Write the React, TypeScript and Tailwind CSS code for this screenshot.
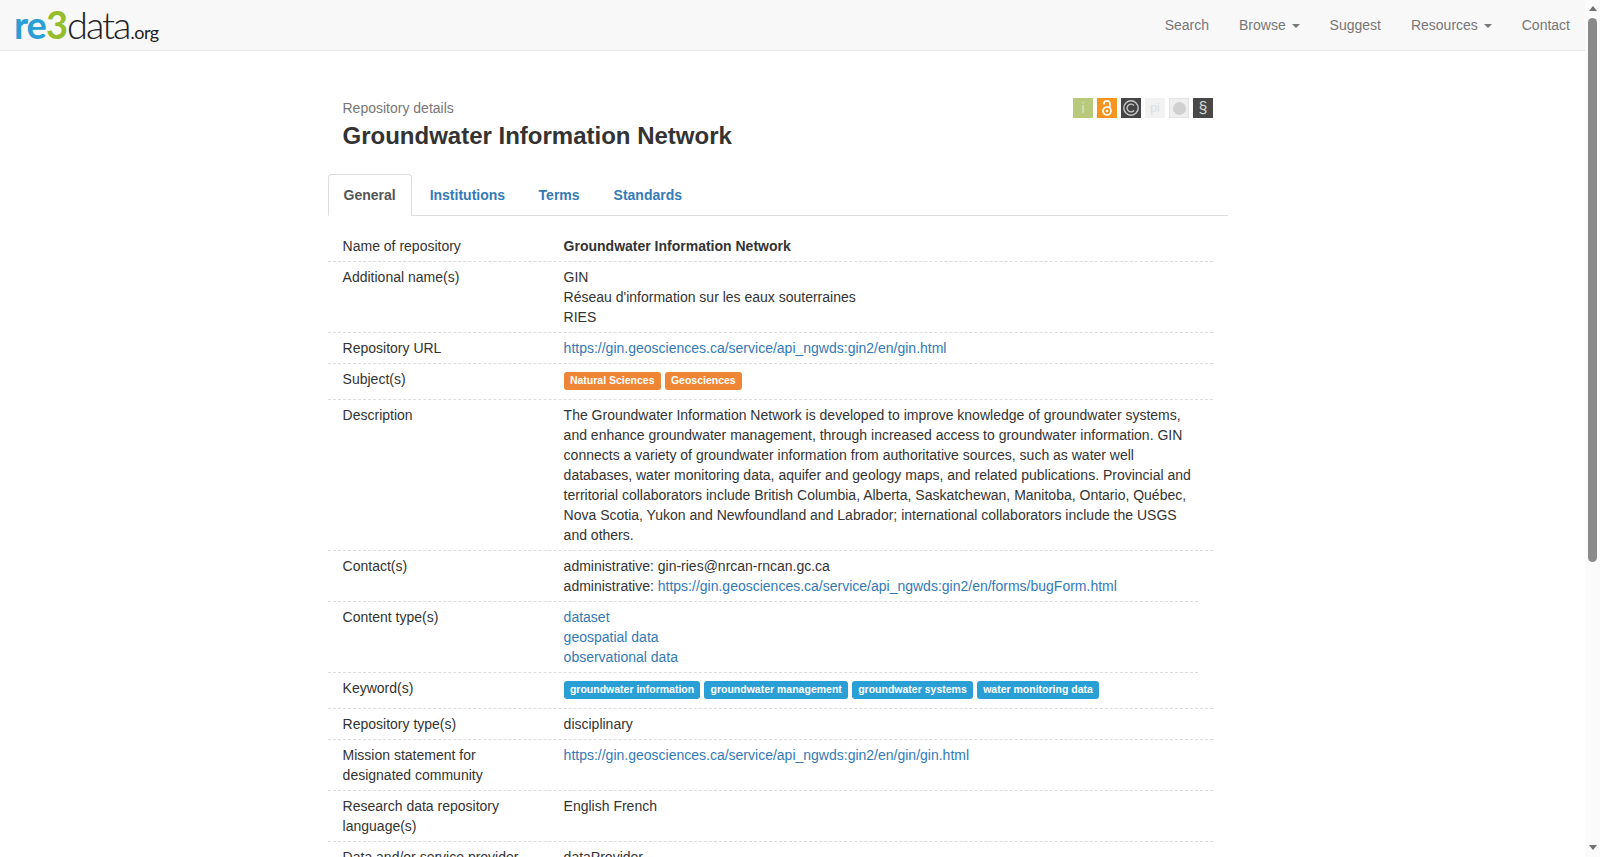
const sans = "font-['Liberation_Sans',Arial,sans-serif]"

function Caret() {
  return <span className="inline-block ml-[2px] align-middle w-0 h-0 border-t-[4px] border-t-[#777] border-x-[4px] border-x-transparent" />
}

function Logo() {
  return (
    <a className="flex items-baseline h-[50px] pl-[14px] pt-[1px] font-['Lato',sans-serif] text-[38px] leading-[46px] text-[#222]">
      <span className="font-bold tracking-[-1px] text-[#2a9fd6]">re</span>
      <span className="font-bold tracking-[-1px] text-[#95bd2b]">3</span>
      <span className="font-light tracking-[-2px]">data</span>
      <span className="ml-[1px] text-[18px] tracking-[-0.5px]">.org</span>
    </a>
  )
}

function NavItem({ label, caret }: { label: string; caret?: boolean }) {
  return (
    <a className="px-[15px] py-[15px] leading-[20px] text-[#777]">
      {label}
      {caret && (
        <>
          {" "}
          <Caret />
        </>
      )}
    </a>
  )
}

function Badges() {
  return (
    <div className="flex gap-[4px]">
      <div className="w-5 h-5 flex items-center justify-center bg-[#b9c97c] text-[14px] text-[#dfe7b8]">i</div>
      <div className="w-5 h-5 flex items-center justify-center bg-[#f7941e]">
        <svg width="12" height="17" viewBox="0 0 12 17" fill="none" stroke="#fff" strokeWidth="1.7">
          <circle cx="6" cy="11" r="4" />
          <circle cx="6" cy="11" r="1.1" fill="#fff" strokeWidth="0.5" />
          <path d="M2.8 4.6V4a3.1 3.1 0 0 1 6.2 0v3.4" />
        </svg>
      </div>
      <div className="w-5 h-5 flex items-center justify-center bg-[#444]">
        <svg width="18" height="18" viewBox="0 0 18 18" fill="none" stroke="#c8c8c8" strokeWidth="1.4">
          <circle cx="9" cy="9" r="7.2" />
          <path d="M12 6.5a3.9 3.9 0 1 0 0 5" />
        </svg>
      </div>
      <div className="w-5 h-5 flex items-center justify-center bg-[#f2f2f2] text-[12px] text-[#dcdcdc]">pi</div>
      <div className="w-5 h-5 flex items-center justify-center bg-[#eeeeee] border border-[#e4e4e4]">
        <div className="w-[13px] h-[13px] rounded-full bg-[#d0d0d0]" />
      </div>
      <div className="w-5 h-5 flex items-center justify-center bg-[#484848] text-[#d8d8d8] text-[16px]">§</div>
    </div>
  )
}

function Row({ label, short, children }: { label: string; short?: boolean; children: React.ReactNode }) {
  return (
    <div className={`flex border-b border-dashed border-[#ddd] ${short ? "mr-[30px]" : "mr-[15px]"}`}>
      <div className="w-[221px] shrink-0 pl-[14.6px] pr-[15px] py-[5px]">{label}</div>
      <div className="w-[664px] shrink-0 pl-[14.6px] pr-[15.4px] py-[5px]">{children}</div>
    </div>
  )
}

function Tags({ children }: { children: React.ReactNode }) {
  return <div className="flex items-start gap-[3.8px] h-[25px] pt-[3px]">{children}</div>
}

function Tag({ color, children }: { color: string; children: React.ReactNode }) {
  return (
    <span className={`rounded-[3px] px-[6.3px] pt-[2px] pb-[3px] text-[10.5px] font-bold leading-[13px] text-white ${color}`}>
      {children}
    </span>
  )
}

function Link({ children }: { children: React.ReactNode }) {
  return <a className="text-[#337ab7]">{children}</a>
}

function Scrollbar() {
  return (
    <div className="w-[15px] shrink-0 flex flex-col items-center bg-[#fbfbfb]">
      <div className="mt-[6px] w-0 h-0 border-b-[5px] border-b-[#707070] border-x-[4.5px] border-x-transparent" />
      <div className="mt-[7px] w-[9px] h-[544px] rounded-[5px] bg-[#8a8a8a]" />
      <div className="mt-[283px] w-0 h-0 border-t-[5px] border-t-[#707070] border-x-[4.5px] border-x-transparent" />
    </div>
  )
}

export default function App() {
  return (
    <div className={`${sans} flex h-screen overflow-hidden bg-white text-[14px] leading-[20px] text-[#333]`}>
      <div className="flex-1 min-w-0">
        <nav className="flex justify-between h-[51px] bg-[#f8f8f8] border-b border-[#e7e7e7]">
          <Logo />
          <div className="flex">
            <NavItem label="Search" />
            <NavItem label="Browse" caret />
            <NavItem label="Suggest" />
            <NavItem label="Resources" caret />
            <NavItem label="Contact" />
          </div>
        </nav>

        <main className="ml-[328px] w-[900px] pt-[47px]">
          <div className="flex justify-between pl-[14.5px] mr-[15px]">
            <div>
              <div className="text-[#777]">Repository details</div>
              <h1 className="mt-[5px] text-[24px] leading-[26.4px] font-bold">Groundwater Information Network</h1>
            </div>
            <Badges />
          </div>

          <div className="flex mt-[25px] h-[42px] border-b border-[#ddd] font-bold text-[#337ab7]">
            <a className="mr-[3px] h-[42px] pl-[14.5px] pr-[15px] py-[10px] bg-white border border-[#ddd] border-b-white rounded-t-[4px] text-[#555]">General</a>
            <a className="mr-[3.5px] px-[15px] py-[11px]">Institutions</a>
            <a className="mr-[4px] px-[15px] py-[11px]">Terms</a>
            <a className="px-[15px] py-[11px]">Standards</a>
          </div>

          <div className="mt-[15px]">
            <Row label="Name of repository">
              <b>Groundwater Information Network</b>
            </Row>
            <Row label="Additional name(s)">
              GIN
              <br />
              Réseau d'information sur les eaux souterraines
              <br />
              RIES
            </Row>
            <Row label="Repository URL">
              <Link>https://gin.geosciences.ca/service/api_ngwds:gin2/en/gin.html</Link>
            </Row>
            <Row label="Subject(s)">
              <Tags>
                <Tag color="bg-[#ef8636]">Natural Sciences</Tag>
                <Tag color="bg-[#ef8636]">Geosciences</Tag>
              </Tags>
            </Row>
            <Row label="Description">
              The Groundwater Information Network is developed to improve knowledge of groundwater systems, and enhance groundwater management, through increased access to groundwater information. GIN connects a variety of groundwater information from authoritative sources, such as water well databases, water monitoring data, aquifer and geology maps, and related publications. Provincial and territorial collaborators include British Columbia, Alberta, Saskatchewan, Manitoba, Ontario, Québec, Nova Scotia, Yukon and Newfoundland and Labrador; international collaborators include the USGS and others.
            </Row>
            <Row label="Contact(s)" short>
              administrative: gin-ries@nrcan-rncan.gc.ca
              <br />
              administrative: <Link>https://gin.geosciences.ca/service/api_ngwds:gin2/en/forms/bugForm.html</Link>
            </Row>
            <Row label="Content type(s)" short>
              <Link>dataset</Link>
              <br />
              <Link>geospatial data</Link>
              <br />
              <Link>observational data</Link>
            </Row>
            <Row label="Keyword(s)">
              <Tags>
                <Tag color="bg-[#2a9fd6]">groundwater information</Tag>
                <Tag color="bg-[#2a9fd6]">groundwater management</Tag>
                <Tag color="bg-[#2a9fd6]">groundwater systems</Tag>
                <Tag color="bg-[#2a9fd6]">water monitoring data</Tag>
              </Tags>
            </Row>
            <Row label="Repository type(s)">disciplinary</Row>
            <Row label="Mission statement for designated community">
              <Link>https://gin.geosciences.ca/service/api_ngwds:gin2/en/gin/gin.html</Link>
            </Row>
            <Row label="Research data repository language(s)">English French</Row>
            <Row label="Data and/or service provider">dataProvider</Row>
          </div>
        </main>
      </div>
      <Scrollbar />
    </div>
  )
}
